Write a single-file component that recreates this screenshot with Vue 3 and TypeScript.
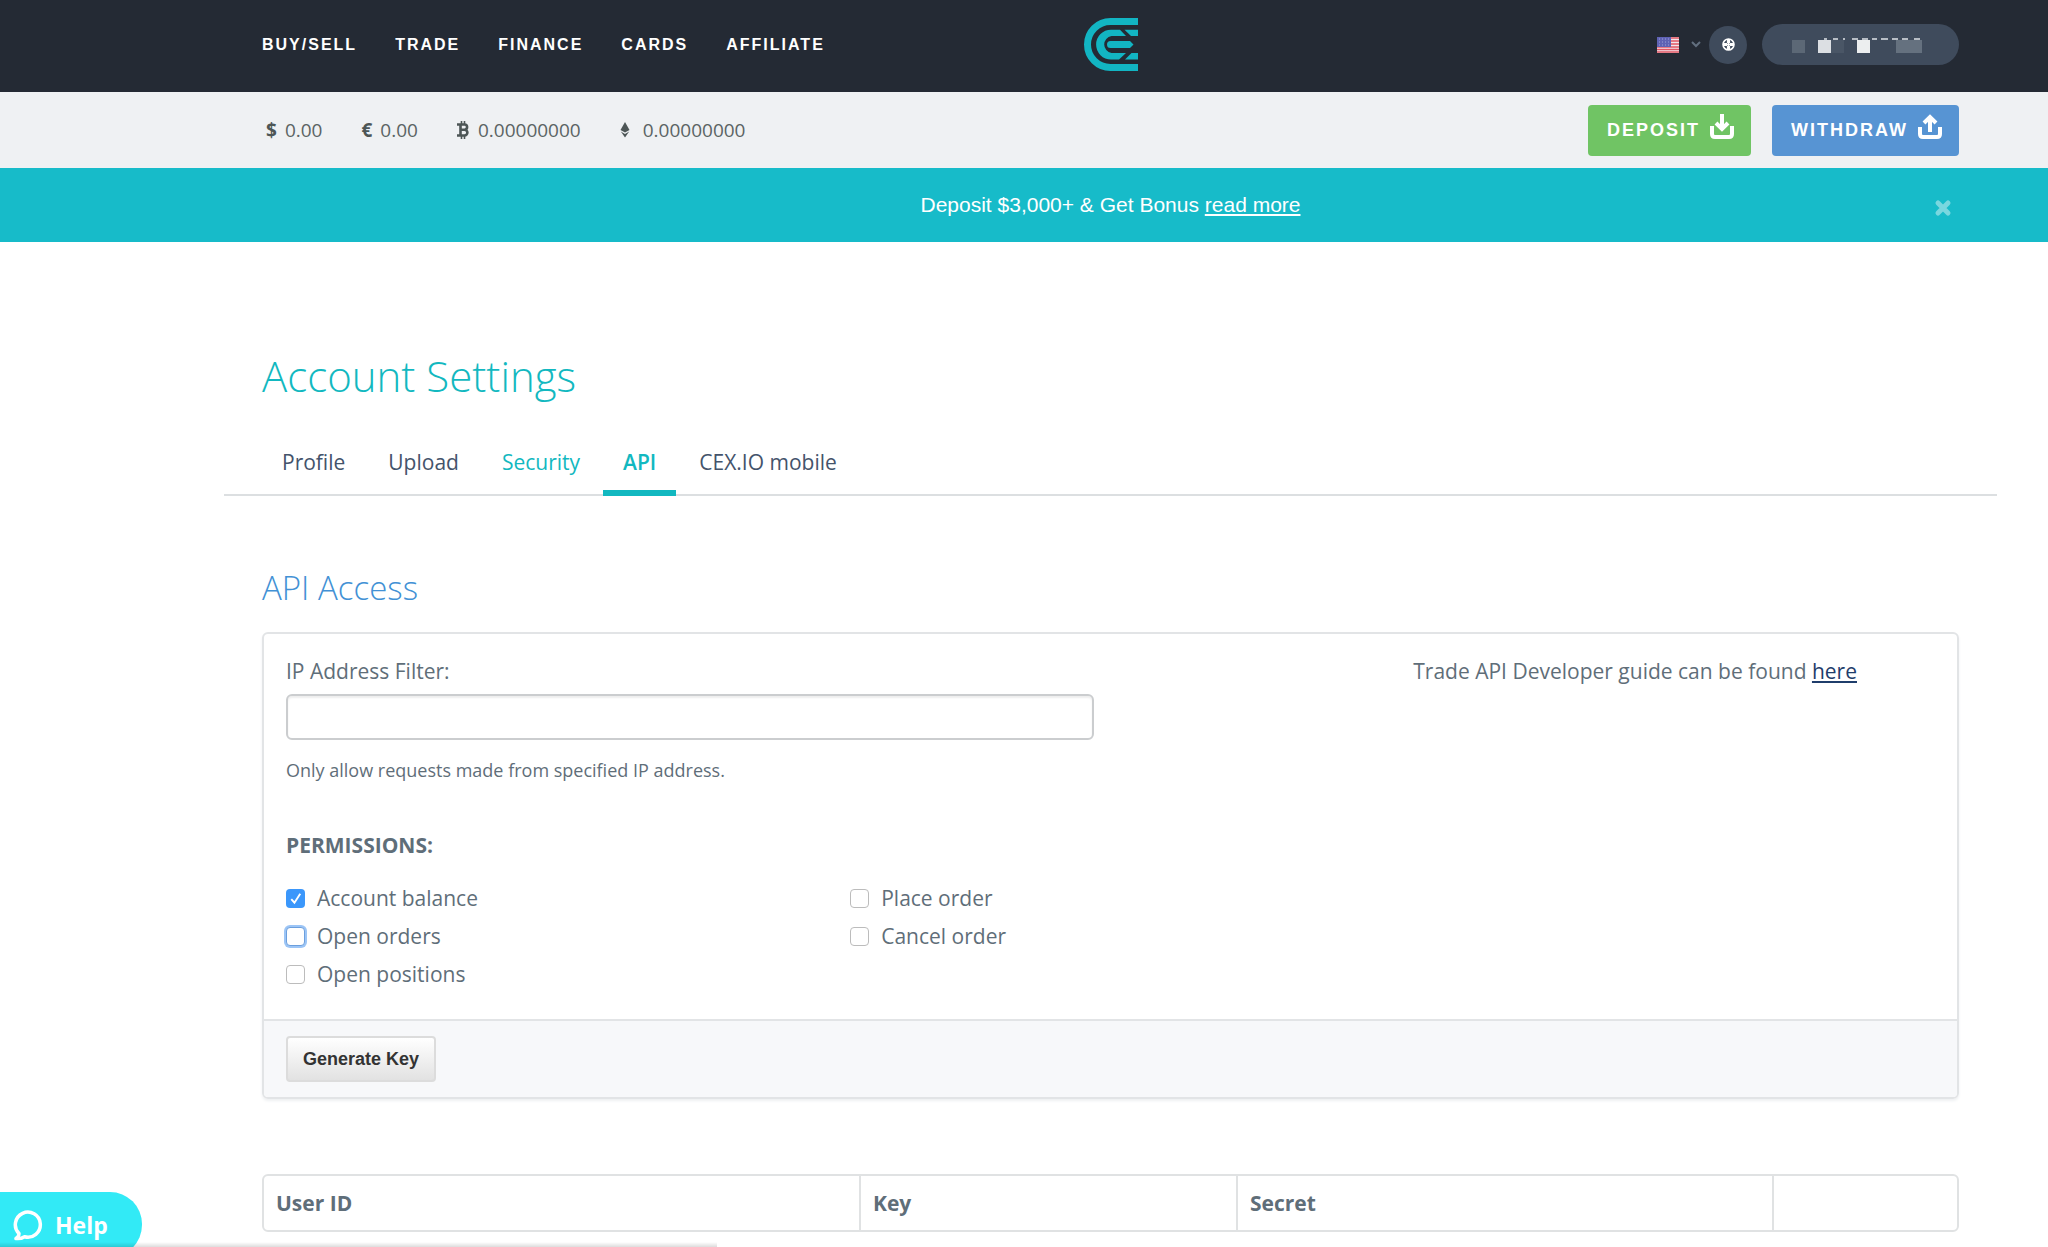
<script setup lang="ts">
import { ref } from 'vue'

interface Tab {
  label: string
  state?: 'accent' | 'active'
}

interface Permission {
  id: string
  label: string
  checked: boolean
  focused?: boolean
}

const navItems: string[] = ['BUY/SELL', 'TRADE', 'FINANCE', 'CARDS', 'AFFILIATE']

const tabs: Tab[] = [
  { label: 'Profile' },
  { label: 'Upload' },
  { label: 'Security', state: 'accent' },
  { label: 'API', state: 'active' },
  { label: 'CEX.IO mobile' },
]

const permissionColumns = ref<Permission[][]>([
  [
    { id: 'account-balance', label: 'Account balance', checked: true },
    { id: 'open-orders', label: 'Open orders', checked: false, focused: true },
    { id: 'open-positions', label: 'Open positions', checked: false },
  ],
  [
    { id: 'place-order', label: 'Place order', checked: false },
    { id: 'cancel-order', label: 'Cancel order', checked: false },
  ],
])

const ipFilter = ref('')
</script>

<template>
  <div class="page">
    <header class="topbar">
      <nav class="main-nav" aria-label="Main">
        <a v-for="item in navItems" :key="item" href="#">{{ item }}</a>
      </nav>
      <a class="logo" href="#" aria-label="Home">
        <svg width="54" height="53" viewBox="0 0 54 53" aria-hidden="true">
          <path d="M54 3.500H26.500a23 23 0 0 0 0 46H54" fill="none" stroke="#12b5c3" stroke-width="7" />
          <path d="M36 11.700H27a14.900 14.900 0 0 0 0 29.800h8l7-6.500H27.500a8.600 8.600 0 0 1 0-17H42z" fill="#12b5c3" />
          <path d="M40.500 11.700H54V18h-7z" fill="#12b5c3" />
          <path d="M41 41.500H54V35h-6.500z" fill="#12b5c3" />
          <path d="M26.500 23H46l3.500 3.500L46 30H26.500a3.500 3.500 0 0 1 0-7z" fill="#12b5c3" />
        </svg>
      </a>
      <div class="user-tools">
        <button class="language" type="button" aria-label="Language">
          <svg width="22" height="16" viewBox="0 0 22 16" aria-hidden="true">
            <rect width="22" height="16" fill="#f2e4ea" />
            <path d="M0 1h22M0 4h22M0 7h22M0 10h22M0 12.500h22M0 15h22" stroke="#e25563" stroke-width="1.500" />
            <rect width="14" height="10" fill="#5f62b4" />
            <path d="M2 2h11M2 5h11M2 8h11" stroke="#9fa3d8" stroke-dasharray="1 2" />
          </svg>
          <svg width="10" height="7" viewBox="0 0 10 7" aria-hidden="true">
            <path d="M1 1l4 4 4-4" fill="none" stroke="#626f7f" stroke-width="2" />
          </svg>
        </button>
        <button class="round" type="button" aria-label="Support">
          <svg width="13" height="13" viewBox="0 0 13 13" aria-hidden="true">
            <circle cx="6.500" cy="6.500" r="5.500" fill="none" stroke="#fff" stroke-width="1.600" />
            <path d="M6.500 1v11M1 6.500h11" stroke="#fff" stroke-width="3.200" />
            <path d="M5 5h3v3H5z" fill="#3f4b5c" />
            <path d="M6.500 4.500v4M4.500 6.500h4" stroke="#fff" stroke-width="1.600" />
          </svg>
        </button>
        <button class="account" type="button" aria-label="Account">
          <svg width="197" height="41" viewBox="0 0 197 41" aria-hidden="true">
            <path d="M62 15h3M71 15h5M81 15h2M90 15h6M100 15h6M110 15h5M119 15h7M130 15h6M140 15h6M152 15h6" stroke="#dfe3e7" stroke-width="1.500" />
            <rect x="30" y="16" width="13" height="13" fill="#5c6876" />
            <rect x="56" y="16" width="13" height="13" fill="#dcdfe3" />
            <rect x="69" y="16" width="13" height="13" fill="#4a5666" />
            <rect x="95" y="16" width="13" height="13" fill="#eceeef" />
            <rect x="134" y="16" width="26" height="13" fill="#65717f" />
          </svg>
        </button>
      </div>
    </header>

    <section class="balances" aria-label="Balances">
      <ul>
        <li><b>$</b><span>0.00</span></li>
        <li><b>€</b><span>0.00</span></li>
        <li>
          <svg width="13" height="18" viewBox="0 0 13 18" aria-hidden="true">
            <path d="M0 3.500h7.500a2.600 2.600 0 0 1 0 5.200H4M7.500 8.700a2.900 2.900 0 0 1 0 5.800H0M3.500 3.500v11" fill="none" stroke="#4d5656" stroke-width="2.600" />
            <path d="M4.500 0v3M7.500 0v3M4.500 15v3M7.500 15v3" stroke="#4d5656" stroke-width="1.600" />
          </svg>
          <span>0.00000000</span>
        </li>
        <li>
          <svg width="15" height="16" viewBox="0 0 15 16" aria-hidden="true">
            <path d="M5 0l4.500 8L5 10.500.5 8z" fill="#4d5656" />
            <path d="M.8 9.500L5 12l4.200-2.500L5 15.500z" fill="#4d5656" />
          </svg>
          <span>0.00000000</span>
        </li>
      </ul>
      <div class="actions">
        <button class="deposit" type="button">
          DEPOSIT
          <svg width="24" height="26" viewBox="0 0 24 26" fill="none" stroke="#fff" stroke-width="4" aria-hidden="true">
            <path d="M2 12v8q0 3 3 3h14q3 0 3-3v-8" />
            <path d="M12 0v13" />
            <path d="M6 9l6 6 6-6" />
          </svg>
        </button>
        <button class="withdraw" type="button">
          WITHDRAW
          <svg width="24" height="26" viewBox="0 0 24 26" fill="none" stroke="#fff" stroke-width="4" aria-hidden="true">
            <path d="M2 13v7q0 3 3 3h14q3 0 3-3v-7" />
            <path d="M12 3v15" />
            <path d="M6 9l6-6 6 6" />
          </svg>
        </button>
      </div>
    </section>

    <section class="promo">
      <p>Deposit $3,000+ &amp; Get Bonus <a href="#">read more</a></p>
      <button type="button" aria-label="Close">
        <svg width="18" height="18" viewBox="0 0 18 18" aria-hidden="true">
          <path d="M4 4l10 10M14 4L4 14" stroke="#79d7df" stroke-width="5" stroke-linecap="round" />
        </svg>
      </button>
    </section>

    <main>
      <h1>Account Settings</h1>
      <nav class="tabs" aria-label="Settings">
        <a v-for="tab in tabs" :key="tab.label" href="#" :class="tab.state">{{ tab.label }}</a>
      </nav>

      <h2>API Access</h2>
      <form class="card" @submit.prevent>
        <div class="card-body">
          <div class="fields">
            <label class="ip-label" for="ip-filter">IP Address Filter:</label>
            <input id="ip-filter" v-model="ipFilter" class="ip-input" type="text" />
            <p class="hint">Only allow requests made from specified IP address.</p>
            <h3>PERMISSIONS:</h3>
            <div class="permissions">
              <ul v-for="(column, index) in permissionColumns" :key="index">
                <li v-for="item in column" :key="item.id">
                  <input :id="item.id" v-model="item.checked" type="checkbox" :class="{ focused: item.focused }" />
                  <label :for="item.id">{{ item.label }}</label>
                </li>
              </ul>
            </div>
          </div>
          <p class="guide">Trade API Developer guide can be found <a href="#">here</a></p>
        </div>
        <div class="card-footer">
          <button type="submit">Generate Key</button>
        </div>
      </form>

      <table>
        <thead>
          <tr>
            <th class="col-user" scope="col">User ID</th>
            <th class="col-key" scope="col">Key</th>
            <th class="col-secret" scope="col">Secret</th>
            <td></td>
          </tr>
        </thead>
      </table>
    </main>

    <button class="help" type="button">
      <svg width="32" height="32" viewBox="0 0 32 32" aria-hidden="true">
        <path d="M7 24.500a12.500 12.500 0 1 1 5.500 3.200Q9 30 4 29.500q3-2 3-5z" fill="none" stroke="#fff" stroke-width="3.500" stroke-linejoin="round" />
      </svg>
      Help
    </button>
    <div class="status-shade"></div>
  </div>
</template>

<style>
body {
  margin: 0;
  background: #fff;
  overflow: hidden;
}
</style>

<style scoped>
.page {
  font-family: "Open Sans", "Noto Sans", sans-serif;
  font-size: 21px;
  line-height: 30px;
  color: #5f6e79;
}

h1, h2, h3, p, ul {
  margin: 0;
  padding: 0;
  font-weight: 400;
}

ul {
  list-style: none;
}

button {
  display: flex;
  align-items: center;
  justify-content: center;
  border: 0;
  padding: 0;
  background: none;
  font-family: "Liberation Sans", Arial, sans-serif;
  font-weight: 700;
}

.topbar, .balances, .promo {
  display: grid;
  align-items: center;
  box-sizing: border-box;
  padding: 0 89px 0 262px;
}

.topbar {
  grid-template-columns: 1fr auto 1fr;
  height: 92px;
  padding-bottom: 3px;
  background: #242a34;
}

.main-nav {
  display: flex;
  gap: 38px;
  font: 700 16px/20px "Liberation Sans", Arial, sans-serif;
  letter-spacing: 2px;
}

.main-nav a {
  color: #fff;
  text-decoration: none;
}

.logo svg {
  display: block;
}

.user-tools {
  display: flex;
  align-items: center;
  justify-content: flex-end;
}

.language {
  gap: 12px;
  margin-right: 8px;
}

.round {
  width: 38px;
  height: 38px;
  margin-right: 15px;
  border-radius: 50%;
  background: #3f4b5c;
}

.account {
  border-radius: 21px;
  background: #3f4b5c;
}

.balances {
  grid-template-columns: 1fr auto;
  height: 76px;
  background: #eff1f3;
}

.balances ul {
  display: flex;
  gap: 39px;
  padding-left: 4px;
  font-size: 19px;
  color: #5b6464;
}

.balances li {
  display: flex;
  align-items: center;
  gap: 8px;
}

.balances b {
  color: #4d5656;
}

.actions {
  display: flex;
  gap: 21px;
}

.actions button {
  gap: 10px;
  height: 51px;
  padding: 0 17px 0 19px;
  border-radius: 4px;
  color: #fff;
  font-size: 18px;
  letter-spacing: 2px;
}

.actions svg {
  margin-bottom: 6px;
}

.deposit {
  background: #70c464;
}

.withdraw {
  background: #5794d3;
}

.promo {
  grid-template-columns: 1fr auto;
  height: 74px;
  background: #17bbc9;
  color: #fff;
}

.promo p {
  padding-left: 25px;
  text-align: center;
  font: 21px/30px "Liberation Sans", Arial, sans-serif;
}

.promo a {
  color: #fff;
}

.promo button {
  padding: 6px 7px 0 0;
}

main {
  padding: 104px 89px 16px 262px;
}

h1 {
  font-size: 42px;
  font-weight: 300;
  line-height: 60px;
  color: #12b8c0;
}

.tabs {
  display: flex;
  gap: 3px;
  margin: 25px -38px 0;
  padding-left: 38px;
  border-bottom: 2px solid #dcdfe1;
  line-height: 34px;
}

.tabs a {
  padding: 14px 20px 11px;
  margin-bottom: -2px;
  border-bottom: 6px solid transparent;
  color: #44536b;
  text-decoration: none;
}

.tabs a.accent {
  color: #12b8c0;
}

.tabs a.active {
  color: #12b8c0;
  font-weight: 600;
  border-bottom-color: #12b8c0;
}

h2 {
  margin-top: 67px;
  font-size: 33px;
  font-weight: 300;
  line-height: 50px;
  color: #4291d5;
}

.card {
  margin-top: 19px;
  border: 2px solid #e2e4e6;
  border-radius: 6px;
  box-shadow: 0 2px 3px #eef0f2;
  overflow: hidden;
}

.card-body {
  display: grid;
  grid-template-columns: 106fr 52fr;
  padding: 22px 22px 26px;
}

.ip-label {
  display: block;
}

.ip-input {
  box-sizing: border-box;
  width: 73%;
  height: 46px;
  margin-top: 8px;
  border: 2px solid #cbcdcf;
  border-radius: 6px;
  box-shadow: inset 0 2px 2px #eee;
  font-size: 21px;
}

.hint {
  margin-top: 15px;
  font-size: 18px;
}

h3 {
  margin-top: 45px;
  font-size: 21px;
  font-weight: 700;
}

.permissions {
  display: grid;
  grid-template-columns: 51% 49%;
  margin-top: 19px;
  line-height: 38px;
}

.permissions li {
  display: flex;
  align-items: center;
  gap: 12px;
}

.permissions input {
  appearance: none;
  box-sizing: border-box;
  width: 19px;
  height: 19px;
  margin: 0;
  border: 1px solid #bcbcbc;
  border-radius: 4px;
  background: #fff;
}

.permissions input:checked {
  border: 0;
  background: #3b97fb url("data:image/svg+xml,%3Csvg xmlns='http://www.w3.org/2000/svg' viewBox='0 0 18 18'%3E%3Cpath d='M5 9.500l3 3.500 5.500-8.500' fill='none' stroke='white' stroke-width='1.800'/%3E%3C/svg%3E");
}

.permissions input.focused {
  border-color: #6c9fdd;
  box-shadow: 0 0 0 2px #9cc5f6;
}

.guide {
  padding-left: 21px;
}

.guide a {
  color: #1f3d6b;
}

.card-footer {
  padding: 15px 22px;
  border-top: 2px solid #e2e4e6;
  background: #f7f8fa;
}

.card-footer button {
  height: 46px;
  padding: 0 15px;
  border: 2px solid #dcdcdc;
  border-radius: 4px;
  background: linear-gradient(#fff, #e2e2e2);
  color: #333;
  font-size: 18px;
}

table {
  width: 100%;
  margin-top: 75px;
  table-layout: fixed;
  border: 2px solid #e0e2e3;
  border-radius: 6px;
  border-spacing: 0;
  text-align: left;
}

th {
  padding: 12px;
  border-right: 2px solid #e0e2e3;
  font-weight: 700;
}

.col-user {
  width: 571px;
}

.col-key {
  width: 351px;
}

.col-secret {
  width: 510px;
}

.help {
  position: fixed;
  left: 0;
  bottom: -10px;
  gap: 11px;
  height: 65px;
  padding: 0 34px 0 12px;
  border-radius: 0 32px 32px 0;
  background: #32eaf6;
  color: #fff;
  font-family: "Open Sans", sans-serif;
  font-size: 23px;
}

.status-shade {
  position: fixed;
  left: 0;
  bottom: 0;
  width: 35%;
  height: 5px;
  background: linear-gradient(transparent, #0002);
}
</style>
